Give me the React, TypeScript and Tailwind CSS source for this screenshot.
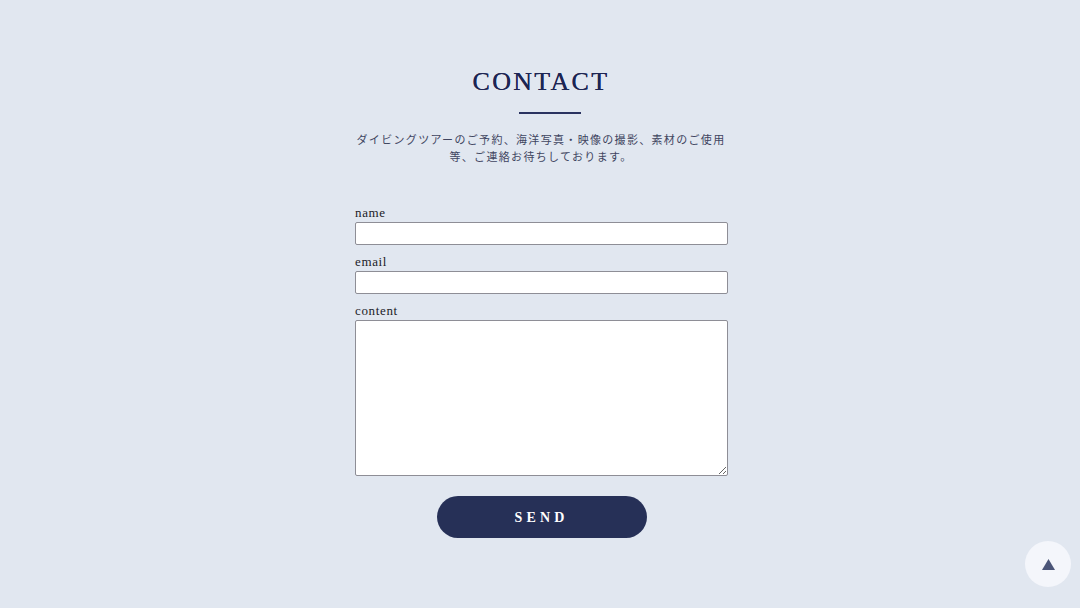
import React from "react";

export default function App() {
  const serif = { fontFamily: '"Liberation Serif", "Noto Sans CJK JP", serif' };
  return (
    <div className="relative min-h-[608px] w-full bg-[#e1e7f0]" style={serif}>
      <div className="flex flex-col items-center pt-[66px]">
        <h1 className="ml-[2px] text-[26px] leading-[32px] tracking-[0.09em] text-[#1d2553] font-normal [text-shadow:0_0_0.6px_#1d2553]">
          CONTACT
        </h1>
        <div className="ml-[20px] mt-[14px] h-[2px] w-[62px] bg-[#2a3360]" />
        <p className="ml-[2px] mt-[18px] text-center text-[11px] leading-[17px] tracking-[0.12em] text-[#3f4560] w-[380px]">
          ダイビングツアーのご予約、海洋写真・映像の撮影、素材のご使用
          <br />
          等、ご連絡お待ちしております。
        </p>
        <form className="ml-[3px] mt-[39px] flex w-[373px] flex-col" onSubmit={(e) => e.preventDefault()}>
          <label className="text-[13px] leading-[16px] tracking-[0.05em] text-[#1c1c28]">name</label>
          <input className="mt-[1px] h-[23px] w-full rounded-[2px] border border-[#8e8e96] bg-white" />
          <label className="mt-[9px] text-[13px] leading-[16px] tracking-[0.05em] text-[#1c1c28]">email</label>
          <input className="mt-[1px] h-[23px] w-full rounded-[2px] border border-[#8e8e96] bg-white" />
          <label className="mt-[9px] text-[13px] leading-[16px] tracking-[0.05em] text-[#1c1c28]">content</label>
          <textarea className="mt-[1px] h-[156px] w-full rounded-[2px] border border-[#8e8e96] bg-white resize-y" />
          <div className="mt-[20px] flex justify-center">
            <button
              type="submit"
              className="h-[42px] w-[210px] rounded-full bg-[#263057] text-[14px] font-bold tracking-[0.3em] text-white"
              style={serif}
            >
              SEND
            </button>
          </div>
        </form>
      </div>
      <div className="absolute left-[1025px] top-[541px] flex h-[46px] w-[46px] items-center justify-center rounded-full bg-[#f4f6fb]">
        <svg width="13" height="11" viewBox="0 0 13 11">
          <polygon points="6.5,0 13,11 0,11" fill="#4b5578" />
        </svg>
      </div>
    </div>
  );
}
